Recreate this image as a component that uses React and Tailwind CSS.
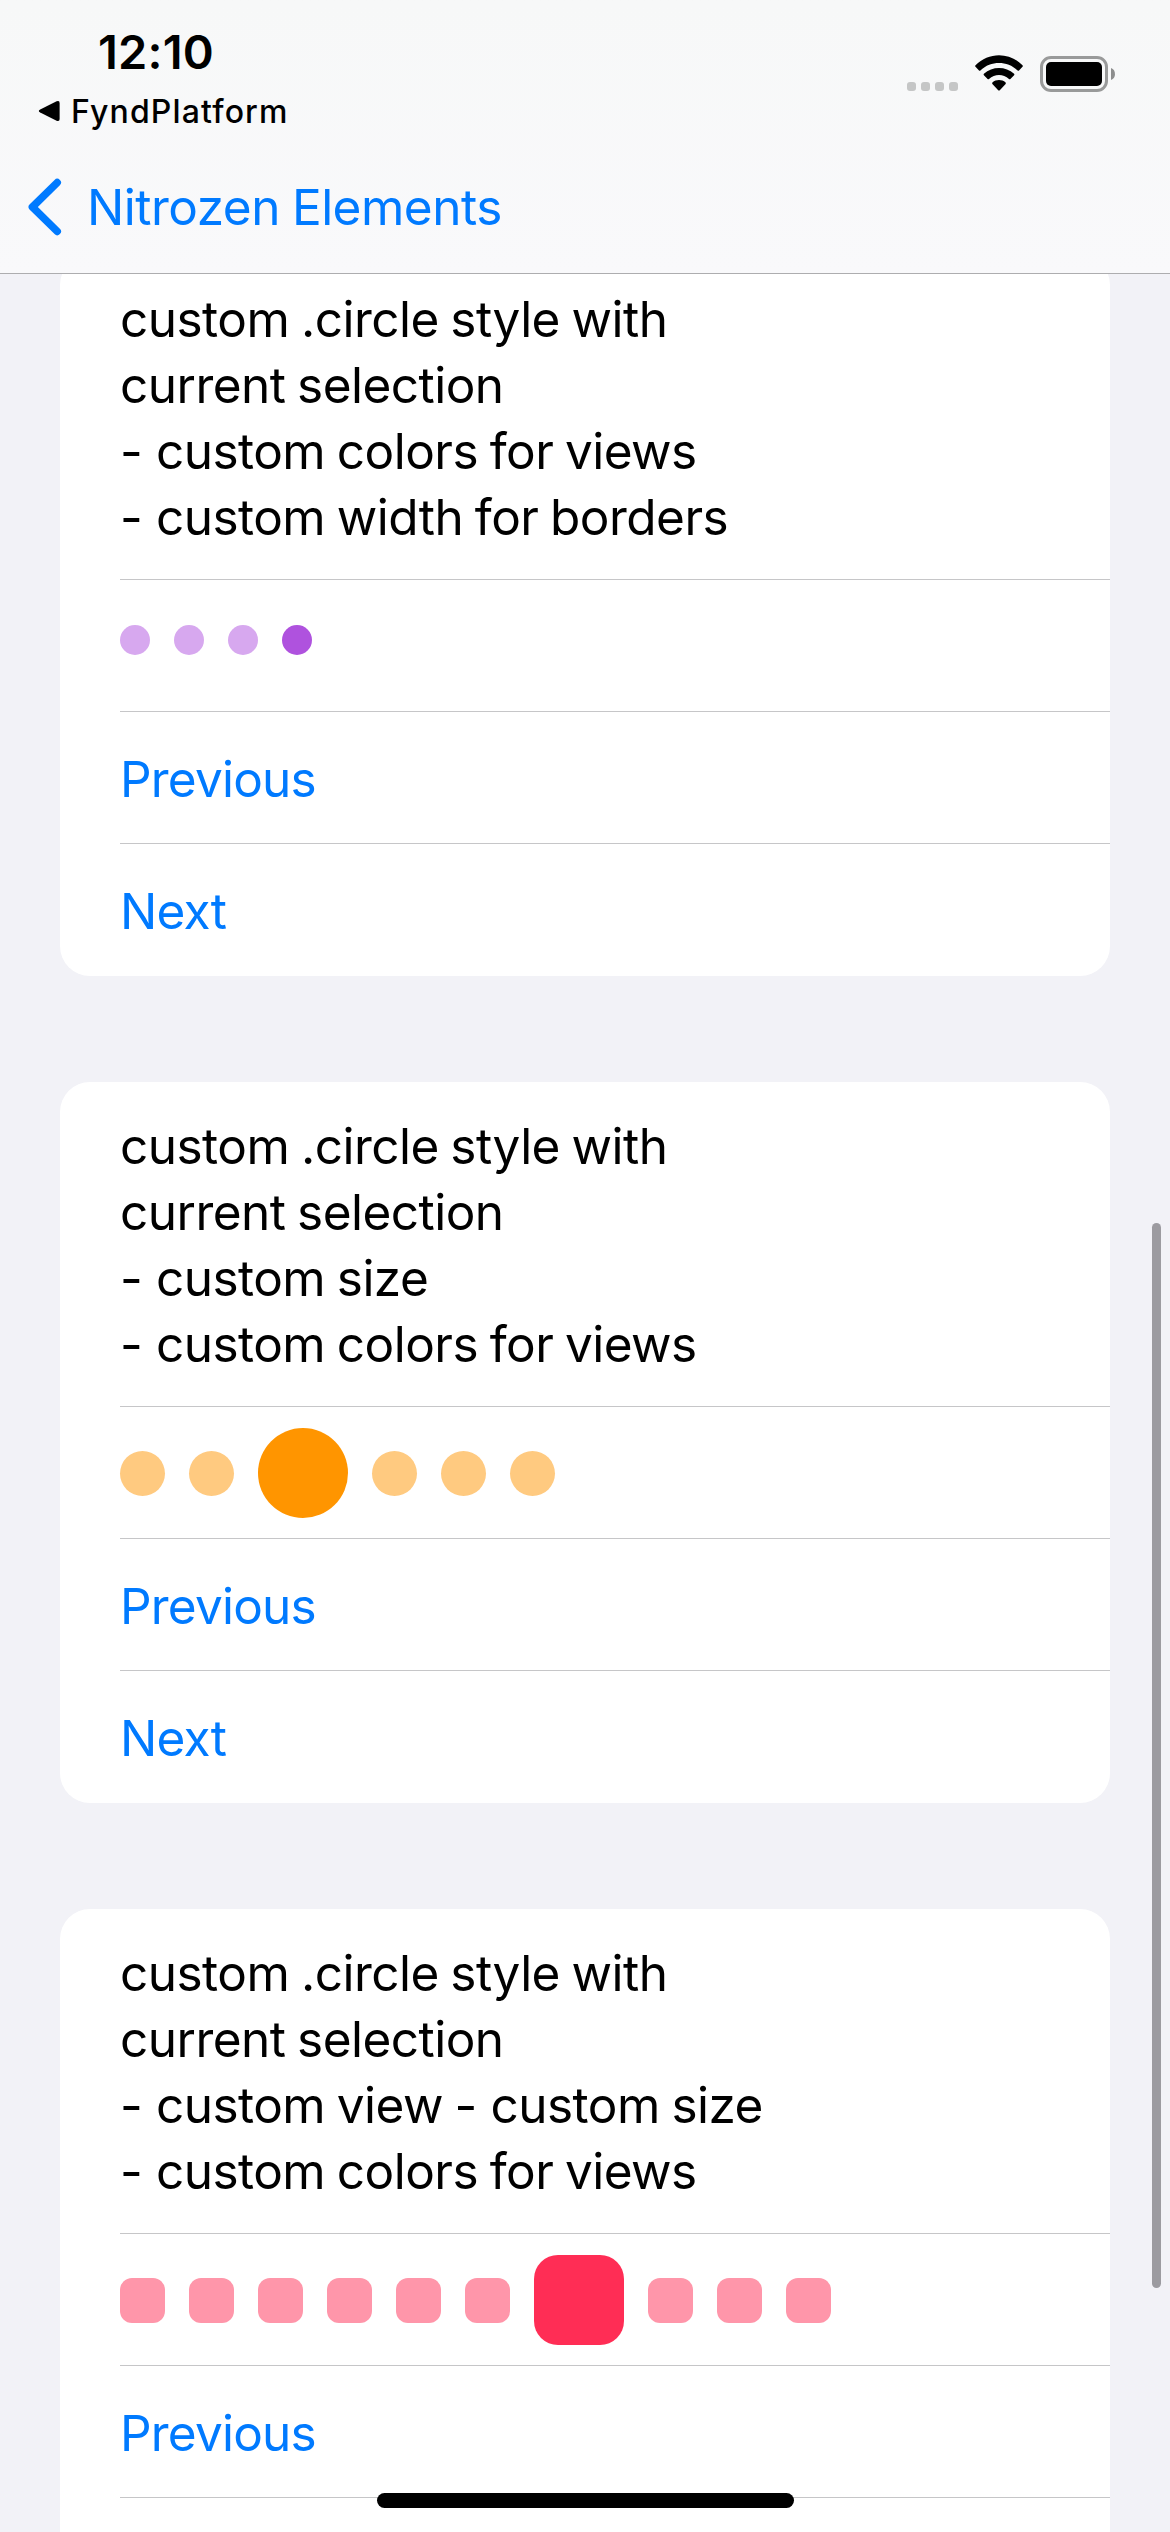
const cards = [
  {
    lines: ["custom .circle style with", "current selection", "- custom colors for views", "- custom width for borders"],
    count: 4,
    current: 3,
    idle: "size-[30px] rounded-full bg-[#d7a8ef]",
    active: "size-[30px] rounded-full bg-[#af52de]",
    row: "pt-[45px]",
    actions: ["Previous", "Next"],
  },
  {
    lines: ["custom .circle style with", "current selection", "- custom size", "- custom colors for views"],
    count: 6,
    current: 2,
    idle: "mt-[23px] size-[45px] rounded-full bg-[#ffca80]",
    active: "size-[90px] rounded-full bg-[#ff9500]",
    row: "pt-[21px]",
    actions: ["Previous", "Next"],
  },
  {
    lines: ["custom .circle style with", "current selection", "- custom view - custom size", "- custom colors for views"],
    count: 10,
    current: 6,
    idle: "mt-[23px] size-[45px] rounded-[12px] bg-[#ff96aa]",
    active: "size-[90px] rounded-[24px] bg-[#ff2d55]",
    row: "pt-[21px]",
    actions: ["Previous"],
  },
];

function StatusBar() {
  return (
    <div className="flex h-[144px] justify-between">
      <div className="flex flex-col pl-[38px]">
        <div className="mt-[22px] h-[60px] pl-[60px] text-[47px] leading-[60px] font-semibold tracking-[0.2px]">12:10</div>
        <div className="mt-[9px] flex h-[40px] items-center">
          <svg className="h-[22px] w-[22px]" viewBox="0 0 22 22">
            <path d="M2.2 9.4 18.6 1.3Q21.6 0 21.6 3V19Q21.6 22 18.6 20.7L2.2 12.6Q-.6 11 2.2 9.4Z" />
          </svg>
          <span className="pt-[2px] pl-[11px] text-[32px] leading-[40px] font-medium tracking-[1.15px]">FyndPlatform</span>
        </div>
      </div>
      <div className="flex pt-[55px] pr-[55px]">
        <div className="mt-[27px] flex gap-[5px]">
          {[0, 1, 2, 3].map((i) => (
            <i key={i} className="size-[9px] rounded-[3px] bg-[#c5c6c6]" />
          ))}
        </div>
        <svg className="ml-[17px] h-[36px] w-[48px]" viewBox="0 0 48 36">
          <path d="M.5 10.2Q-.2 11 .5 11.8L4 15.4Q4.7 16 5.4 15.4C16 5.6 32 5.6 42.6 15.4Q43.3 16 44 15.4L47.5 11.8Q48.2 11 47.5 10.2C34.5-3.2 13.5-3.2.5 10.2Z" />
          <path d="M8.9 18.8Q8.2 19.5 8.9 20.2L12.6 24Q13.3 24.5 14 24C19.8 18.8 28.2 18.8 34 24Q34.7 24.5 35.4 24L39.1 20.2Q39.8 19.5 39.1 18.8C30.6 11 17.4 11 8.9 18.8Z" />
          <path d="M17.4 27.5Q16.8 28.2 17.4 28.9L23.2 35.2Q24 36 24.8 35.2L30.6 28.9Q31.2 28.2 30.6 27.5C26.8 24.3 21.2 24.3 17.4 27.5Z" />
        </svg>
        <div className="mt-[1px] ml-[17px] h-[36px] w-[68px] rounded-[11px] border-[3px] border-[#999a9a] p-[3px]">
          <div className="size-full rounded-[5px] bg-black" />
        </div>
        <svg className="mt-[13px] ml-[3px] h-[12px] w-[4px]" viewBox="0 0 4 12">
          <path d="M0 0C5.3 1.5 5.3 10.5 0 12Z" fill="#8d8e8e" />
        </svg>
      </div>
    </div>
  );
}

// Dashes are set slightly wider than the surrounding text.
function Line({ text }) {
  return (
    <p className="whitespace-nowrap">
      {text.split(/(-)/).map((part, i) =>
        part === "-" ? <span key={i} className="tracking-[1.5px]">-</span> : part
      )}
    </p>
  );
}

function Card({ card }) {
  return (
    <section className="h-[721px] shrink-0 overflow-hidden rounded-[30px] bg-white pl-[60px]">
      <div className="h-[325px] border-b border-[#c6c6c8] pt-[31px] text-[49.5px] leading-[66px] tracking-[-0.52px] [word-spacing:-1.8px]">
        {card.lines.map((l) => (
          <Line key={l} text={l} />
        ))}
      </div>
      <div className={"flex h-[132px] items-start gap-[24px] border-b border-[#c6c6c8] " + card.row}>
        {Array.from({ length: card.count }, (_, i) => (
          <i key={i} className={i === card.current ? card.active : card.idle} />
        ))}
      </div>
      {card.actions.map((label) => (
        <button
          key={label}
          className="block h-[132px] w-full border-b border-[#c6c6c8] pt-[2px] text-left text-[49.5px] leading-[131px] tracking-[-0.8px] text-[#007aff] [&:nth-child(4)]:border-transparent"
        >
          {label}
        </button>
      ))}
    </section>
  );
}

export default function App() {
  return (
    <div className="relative flex h-[2532px] w-[1170px] flex-col overflow-hidden bg-[#f2f2f7] font-['Inter',sans-serif] text-black">
      <header className="relative z-10 h-[274px] shrink-0 border-b border-[#adadaf] bg-linear-to-b from-[#f7f8f8] to-[#f9f9fb]">
        <StatusBar />
        <div className="flex h-[126px] items-center pl-[28px] text-[#007aff]">
          <svg className="h-[58px] w-[34px]" viewBox="0 0 34 58" fill="none" stroke="currentColor" strokeWidth="7.6" strokeLinecap="round" strokeLinejoin="round">
            <path d="M29.2 4.6 4.4 29 29.2 53.4" />
          </svg>
          <span className="pl-[25px] text-[49.5px] leading-[66px] tracking-[-0.5px] [word-spacing:-1.5px]">Nitrozen Elements</span>
        </div>
      </header>
      <main className="-mt-[19px] flex flex-col gap-[106px] px-[60px]">
        {cards.map((c, i) => (
          <Card key={i} card={c} />
        ))}
      </main>
      <div className="absolute top-[1223px] right-[9px] h-[1065px] w-[9px] rounded-full bg-[#9c9ba0]" />
      <div className="absolute top-[2493px] left-[377px] h-[15px] w-[417px] rounded-full bg-black" />
    </div>
  );
}
